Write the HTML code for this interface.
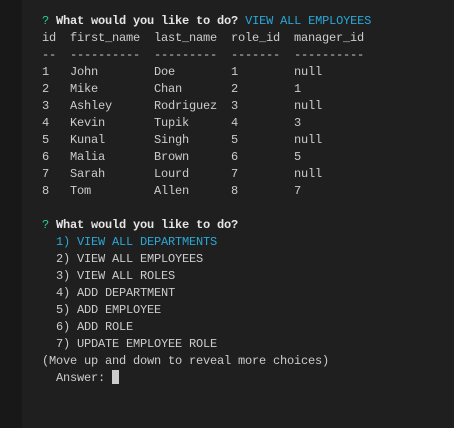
<!DOCTYPE html>
<html><head><meta charset="utf-8"><style>
html,body{margin:0;padding:0;}
body{width:454px;height:428px;background:#1f1f1f;position:relative;overflow:hidden;}
.side{position:absolute;left:0;top:0;width:22px;height:428px;background:#181818;}
pre{position:absolute;left:42px;top:13px;margin:0;font-family:"Liberation Mono",monospace;font-size:12px;letter-spacing:-0.2px;line-height:17px;color:#cccccc;white-space:pre;}
.g{color:#23d18b}.c{color:#29a8d8}.b{font-weight:bold;color:#e5e5e5}
.cur{display:inline-block;width:7px;height:14px;background:#cccccc;vertical-align:-3px;}
</style></head><body><div class="side"></div>
<pre><span class="g">?</span> <span class="b">What would you like to do?</span> <span class="c">VIEW ALL EMPLOYEES</span>
id  first_name  last_name  role_id  manager_id
--  ----------  ---------  -------  ----------
1   John        Doe        1        null
2   Mike        Chan       2        1
3   Ashley      Rodriguez  3        null
4   Kevin       Tupik      4        3
5   Kunal       Singh      5        null
6   Malia       Brown      6        5
7   Sarah       Lourd      7        null
8   Tom         Allen      8        7

<span class="g">?</span> <span class="b">What would you like to do?</span>
  <span class="c">1) VIEW ALL DEPARTMENTS</span>
  2) VIEW ALL EMPLOYEES
  3) VIEW ALL ROLES
  4) ADD DEPARTMENT
  5) ADD EMPLOYEE
  6) ADD ROLE
  7) UPDATE EMPLOYEE ROLE
(Move up and down to reveal more choices)
  Answer: <span class="cur"></span></pre>
</body></html>
